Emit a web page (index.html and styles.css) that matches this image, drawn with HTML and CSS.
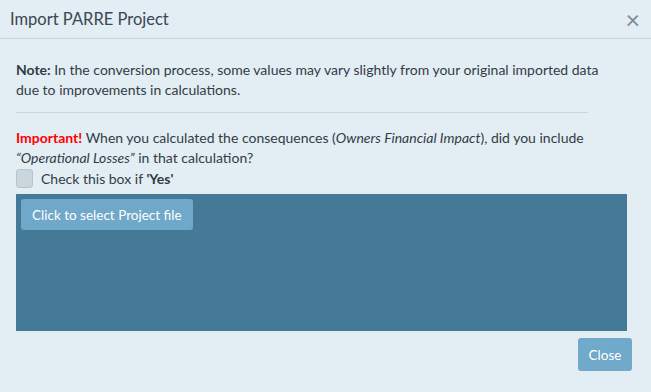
FILE: index.html
```html
<!DOCTYPE html>
<html lang="en">
<head>
    <meta charset="UTF-8">
    <title>Import PARRE Project</title>
    <link rel="stylesheet" href="styles.css">
</head>
<body>
    <div class="modal">
        <div class="modal-header">
            <h1>Import PARRE Project</h1>
            <span class="close-x">&times;</span>
        </div>
        <div class="modal-body">
            <p class="note"><b>Note:</b> In the conversion process, some values may vary slightly from your original imported data due to improvements in calculations.</p>
            <hr>
            <p class="important"><b class="red">Important!</b> When you calculated the consequences (<i>Owners Financial Impact</i>), did you include <i>&ldquo;Operational Losses&rdquo;</i> in that calculation?</p>
            <label class="check-row">
                <span class="checkbox"></span>
                <span>Check this box if <b>'Yes'</b></span>
            </label>
            <div class="drop-zone">
                <button class="select-btn">Click to select Project file</button>
            </div>
        </div>
        <div class="modal-footer">
            <button class="close-btn">Close</button>
        </div>
    </div>
</body>
</html>
```

FILE: styles.css
```css
body {
    margin: 0;
    font-family: Lato, "Open Sans", sans-serif;
    background-color: #e2edf4;
    color: #333c44;
}
.modal {
    width: 651px;
    height: 392px;
}
.modal-header {
    display: flex;
    justify-content: space-between;
    align-items: center;
    height: 38px;
    padding: 0 10px;
    border-bottom: 1px solid #c5d3dc;
}
.modal-header h1 {
    margin: 0;
    font-size: 16.5px;
    font-weight: normal;
    color: #3b4650;
}
.close-x {
    font-size: 25px;
    line-height: 20px;
    color: #7c8c98;
    margin-right: 1px;
}
.modal-body {
    padding: 21px 24px 0 16px;
}
.note {
    margin: 0;
    font-size: 14px;
    line-height: 20px;
    width: 585px;
}
hr {
    border: none;
    border-top: 1px solid #c9d5dd;
    margin: 12px 0 0 0;
    width: 572px;
}
.important {
    margin: 15px 0 0 0;
    font-size: 14px;
    line-height: 20px;
    width: 585px;
}
.red {
    color: #ff0000;
}
.check-row {
    display: flex;
    align-items: center;
    gap: 8px;
    font-size: 14px;
    height: 20px;
}
.checkbox {
    width: 15px;
    height: 17px;
    border: 1px solid #b8c4cc;
    border-radius: 3px;
    background-color: #cbd5dc;
}
.drop-zone {
    margin-top: 6px;
    height: 127px;
    background-color: #447a98;
    padding: 5px;
}
.select-btn {
    font-family: Lato, sans-serif;
    font-size: 13.5px;
    color: #ffffff;
    background-color: #6fa8c8;
    border: none;
    border-radius: 3px;
    padding: 0 11px;
    height: 31px;
}
.modal-footer {
    display: flex;
    justify-content: flex-end;
    padding: 7px 19px 0 0;
}
.close-btn {
    font-family: Lato, sans-serif;
    font-size: 13.5px;
    color: #ffffff;
    background-color: #70a9c9;
    border: none;
    border-radius: 3px;
    width: 54px;
    height: 33px;
}
```
